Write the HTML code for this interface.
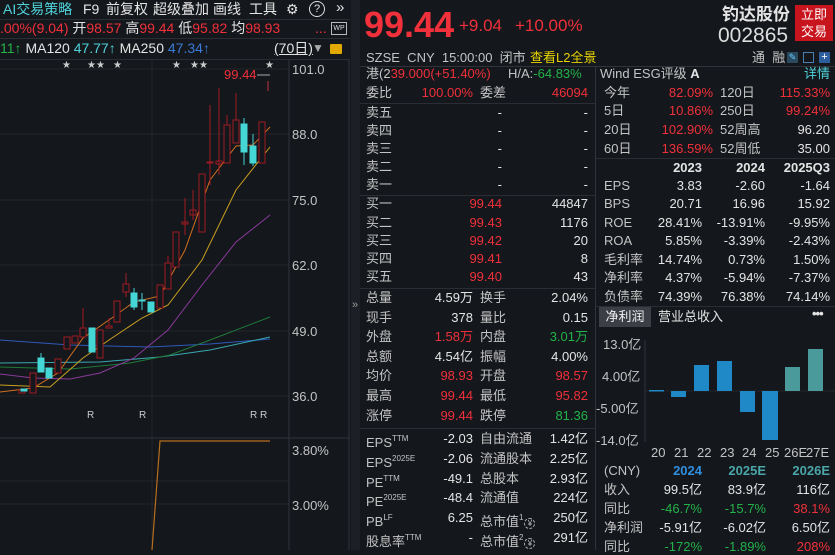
<!DOCTYPE html>
<html><head><meta charset="utf-8"><style>
*{margin:0;padding:0;box-sizing:border-box}
body{width:835px;height:550px;background:#14171c;overflow:hidden;position:relative;font-family:"Liberation Sans","Noto Sans CJK SC",sans-serif;font-size:13px;color:#d8d8d8}
.t{position:absolute;white-space:nowrap;line-height:16px}
.r{color:#f0303a}.g{color:#22b34a}.c{color:#4fd3da}.w{color:#e4e4e4}.l{color:#c4c4c4}.b{color:#3a7bd5}
.hl{position:absolute;height:1px;background:#2a2d33}
.vl{position:absolute;width:1px;background:#2a2d33}
sup{font-size:8px;vertical-align:6px}
.y{display:inline-block;width:11px;height:11px;border:1px dashed #aaa;border-radius:50%;font-size:8px;line-height:9px;text-align:center;vertical-align:0px;margin-left:1px}
</style></head><body>

<!-- LEFT PANEL -->
<div class="t c" style="left:3px;top:1px;font-size:14px;line-height:17px">AI交易策略</div>
<div class="t w" style="left:83px;top:1px;font-size:14px;line-height:17px">F9</div>
<div class="t w" style="left:106px;top:1px;font-size:14px;line-height:17px">前复权</div>
<div class="t w" style="left:153px;top:1px;font-size:14px;line-height:17px">超级叠加</div>
<div class="t w" style="left:213px;top:1px;font-size:14px;line-height:17px">画线</div>
<div class="t w" style="left:249px;top:1px;font-size:14px;line-height:17px">工具</div>
<div class="t w" style="left:286px;top:1px;font-size:14px;line-height:17px">⚙</div>
<div class="t w" style="left:309px;top:1px;width:16px;height:16px;border:1px solid #ddd;border-radius:50%;font-size:11px;line-height:14px;text-align:center">?</div>
<div class="t w" style="left:336px;top:0px;font-size:15px">»</div>
<div class="hl" style="left:0;top:19px;width:350px"></div>
<div class="t" style="left:0;top:20px;font-size:14px;line-height:17px"><span class="r">.00%(9.04)</span> <span class="w">开</span><span class="r">98.57</span> <span class="w">高</span><span class="r">99.44</span> <span class="w">低</span><span class="r">95.82</span> <span class="w">均</span><span class="r">98.93</span></div>
<div class="t r" style="left:315px;top:20px;font-size:14px">...</div>
<div class="t" style="left:331px;top:22px;width:16px;height:13px;border:1px solid #bbb;font-size:7px;line-height:11px;text-align:center;color:#ddd">WP</div>
<div class="hl" style="left:0;top:38px;width:350px"></div>
<div class="t" style="left:0;top:40px;font-size:14px;line-height:17px"><span class="g">11↑</span> <span class="w">MA120</span> <span class="c">47.77↑</span> <span class="w">MA250</span> <span class="b">47.34↑</span></div>
<div class="t w" style="left:274px;top:40px;font-size:14px;line-height:17px;text-decoration:underline">(70日)</div>
<div class="t" style="left:312px;top:40px;font-size:12px;color:#aaa">▼</div>
<div class="t" style="left:330px;top:44px;width:12px;height:10px;background:#e0a800;border-radius:1px"></div>
<div class="hl" style="left:0;top:59px;width:350px"></div>

<svg style="position:absolute;left:0;top:60px" width="350" height="490">
<g stroke="#23262c" stroke-width="1">
<line x1="0" y1="9" x2="289" y2="9"/><line x1="0" y1="74" x2="289" y2="74"/><line x1="0" y1="140" x2="289" y2="140"/><line x1="0" y1="205" x2="289" y2="205"/><line x1="0" y1="271" x2="289" y2="271"/><line x1="0" y1="336" x2="289" y2="336"/>
<line x1="152" y1="0" x2="152" y2="490"/>
<line x1="0" y1="421" x2="289" y2="421"/><line x1="0" y1="444" x2="289" y2="444"/>
</g>
<line x1="289" y1="0" x2="289" y2="490" stroke="#30333a"/>
<line x1="0" y1="378" x2="350" y2="378" stroke="#30333a"/>
<line x1="349" y1="0" x2="349" y2="490" stroke="#30333a"/>
<g fill="#ccc" font-size="10" font-family="Liberation Sans">
<text x="62" y="8">★</text><text x="87" y="8">★★</text><text x="113" y="8">★</text><text x="172" y="8">★</text><text x="190" y="8">★★</text><text x="265" y="8">★</text>
<text x="87" y="358">R</text><text x="139" y="358">R</text><text x="250" y="358">R R</text>
</g>
<g fill="#c4c4c4" font-size="13" font-family="Liberation Sans">
<text x="292" y="14">101.0</text><text x="292" y="79">88.0</text><text x="292" y="145">75.0</text><text x="292" y="210">62.0</text><text x="292" y="276">49.0</text><text x="292" y="341">36.0</text>
<text x="292" y="395">3.80%</text><text x="292" y="450">3.00%</text>
</g>
<text x="224" y="19" fill="#f0303a" font-size="13" font-family="Liberation Sans">99.44</text>
<line x1="257" y1="15" x2="270" y2="15" stroke="#aaa"/>
<path d="M268 21v10" stroke="#c0303a"/>
<g fill="none" stroke-width="1">
<polyline stroke="#2f59b8" points="0,280 70,285 150,287 210,284 270,279"/>
<polyline stroke="#3aa8b0" points="0,303 100,302 160,297 210,290 270,277"/>
<polyline stroke="#1f7a3a" points="0,307 70,309 130,303 170,295 210,280 270,257"/>
<polyline stroke="#8a3a9a" points="0,314 33,318 70,319 100,313 134,298 168,270 202,225 236,182 270,155"/>
<polyline stroke="#c9a020" points="0,325 50,327 83,298 109,280 142,258 168,245 202,200 236,130 270,87"/>
<polyline stroke="#d07020" points="0,332 33,328 58,313 83,278 109,260 134,242 160,236 185,190 210,120 236,86 253,85 270,67"/>
</g>
<g stroke="#a01a22" fill="#14171c" stroke-width="1">
<rect x="19" y="330" width="6" height="3"/>
<rect x="30" y="313" width="6" height="20"/>
<rect x="55" y="299" width="6" height="14"/>
<rect x="64" y="277" width="6" height="12"/>
<rect x="72" y="276" width="6" height="7"/>
<rect x="80" y="268" width="6" height="9"/><line x1="83" y1="248" x2="83" y2="268"/>
<rect x="97" y="270" width="6" height="28"/>
<rect x="106" y="266" width="6" height="2"/><line x1="109" y1="258" x2="109" y2="266"/>
<rect x="114" y="241" width="6" height="21"/>
<rect x="123" y="224" width="6" height="8"/><line x1="126" y1="213" x2="126" y2="224"/><line x1="126" y1="232" x2="126" y2="237"/>
<rect x="157" y="225" width="6" height="23"/>
<rect x="165" y="203" width="6" height="26"/><line x1="168" y1="196" x2="168" y2="203"/>
<rect x="173" y="172" width="6" height="35"/>
<rect x="182" y="162" width="6" height="2"/><line x1="185" y1="138" x2="185" y2="175"/>
<rect x="190" y="150" width="6" height="5"/><line x1="193" y1="130" x2="193" y2="160"/>
<rect x="199" y="114" width="6" height="58"/>
<rect x="207" y="102" width="6" height="1"/><line x1="210" y1="45" x2="210" y2="125"/>
<rect x="216" y="101" width="6" height="3"/><line x1="219" y1="28" x2="219" y2="115"/>
<rect x="224" y="65" width="6" height="38"/><line x1="227" y1="55" x2="227" y2="65"/>
<rect x="233" y="60" width="6" height="23"/><line x1="236" y1="33" x2="236" y2="60"/>
<rect x="259" y="62" width="6" height="41"/>
</g>
<g fill="#45d6d6" stroke="#45d6d6">
<rect x="21" y="329" width="6" height="2"/>
<rect x="38" y="298" width="6" height="14"/><line x1="41" y1="293" x2="41" y2="298"/>
<rect x="46" y="308" width="6" height="10"/>
<rect x="89" y="268" width="6" height="24"/>
<rect x="131" y="233" width="6" height="14"/><line x1="134" y1="228" x2="134" y2="250"/>
<rect x="139" y="240" width="6" height="1"/><line x1="142" y1="233" x2="142" y2="250"/>
<rect x="148" y="242" width="6" height="10"/>
<rect x="241" y="64" width="6" height="28"/><line x1="244" y1="58" x2="244" y2="105"/>
<rect x="250" y="86" width="6" height="17"/><line x1="253" y1="74" x2="253" y2="106"/>
</g>
<polyline fill="none" stroke="#b8701c" stroke-width="1.2" points="152,490 160,381 270,381"/>
</svg>
<div style="position:absolute;left:351px;top:0;width:9px;height:550px;background:#1c1f25"></div>
<div class="t" style="left:352px;top:297px;font-size:11px;color:#999">»</div>

<!-- MIDDLE HEADER -->
<div class="t r" style="left:364px;top:6px;font-size:36px;line-height:38px;font-weight:bold">99.44</div>
<div class="t r" style="left:459px;top:16px;font-size:17px;line-height:20px">+9.04</div>
<div class="t r" style="left:515px;top:16px;font-size:17px;line-height:20px">+10.00%</div>
<div class="t w" style="left:722px;top:5px;font-size:17px;line-height:20px;font-weight:bold">钓达股份</div>
<div class="t w" style="left:718px;top:25px;font-size:21px;line-height:22px;color:#ddd">002865</div>
<div class="t" style="left:795px;top:5px;width:38px;height:36px;background:#c8141c;color:#fff;font-size:13px;line-height:17px;text-align:center;padding-top:1px">立即<br>交易</div>
<div class="t l" style="left:366px;top:50px;font-size:13px">SZSE&nbsp;&nbsp;CNY&nbsp;&nbsp;15:00:00&nbsp;&nbsp;闭市</div>
<div class="t" style="left:530px;top:50px;color:#e8d400">查看L2全景</div>
<div class="t l" style="left:752px;top:50px">通&nbsp;&nbsp;融</div>
<div class="t" style="left:787px;top:52px;width:11px;height:11px;background:#2a4a60;color:#6cf;font-size:9px;line-height:11px;text-align:center">✎</div>
<div class="t" style="left:803px;top:52px;width:11px;height:11px;border:1px solid #4a7fb0"></div>
<div class="t" style="left:819px;top:52px;width:11px;height:11px;background:#2c5d9c;color:#fff;font-size:11px;line-height:11px;text-align:center">+</div>
<div class="hl" style="left:360px;top:66px;width:475px;background:#30333a"></div>
<div class="vl" style="left:595px;top:66px;height:484px;background:#30333a"></div>

<div class="t" style="left:366px;top:66px"><span class="l">港(2</span><span class="r">39.000(+51.40%)</span></div>
<div class="t l" style="left:508px;top:66px">H/A:<span class="g">-64.83%</span></div>
<div class="t l" style="left:366px;top:85px">委比</div><div class="t r" style="right:362px;top:85px">100.00%</div><div class="t l" style="left:480px;top:85px">委差</div><div class="t r" style="right:247px;top:85px">46094</div>
<div class="hl" style="left:360px;top:103px;width:235px"></div>
<div class="t l" style="left:366px;top:105px">卖五</div><div class="t w" style="right:333px;top:105px">-</div><div class="t w" style="right:247px;top:105px">-</div>
<div class="t l" style="left:366px;top:123px">卖四</div><div class="t w" style="right:333px;top:123px">-</div><div class="t w" style="right:247px;top:123px">-</div>
<div class="t l" style="left:366px;top:141px">卖三</div><div class="t w" style="right:333px;top:141px">-</div><div class="t w" style="right:247px;top:141px">-</div>
<div class="t l" style="left:366px;top:159px">卖二</div><div class="t w" style="right:333px;top:159px">-</div><div class="t w" style="right:247px;top:159px">-</div>
<div class="t l" style="left:366px;top:177px">卖一</div><div class="t w" style="right:333px;top:177px">-</div><div class="t w" style="right:247px;top:177px">-</div>
<div class="hl" style="left:360px;top:195px;width:235px"></div>
<div class="t l" style="left:366px;top:196px">买一</div><div class="t r" style="right:333px;top:196px">99.44</div><div class="t w" style="right:247px;top:196px">44847</div>
<div class="t l" style="left:366px;top:215px">买二</div><div class="t r" style="right:333px;top:215px">99.43</div><div class="t w" style="right:247px;top:215px">1176</div>
<div class="t l" style="left:366px;top:233px">买三</div><div class="t r" style="right:333px;top:233px">99.42</div><div class="t w" style="right:247px;top:233px">20</div>
<div class="t l" style="left:366px;top:251px">买四</div><div class="t r" style="right:333px;top:251px">99.41</div><div class="t w" style="right:247px;top:251px">8</div>
<div class="t l" style="left:366px;top:269px">买五</div><div class="t r" style="right:333px;top:269px">99.40</div><div class="t w" style="right:247px;top:269px">43</div>
<div class="hl" style="left:360px;top:288px;width:235px"></div>

<div class="t l" style="left:366px;top:290px">总量</div><div class="t w" style="right:362px;top:290px">4.59万</div><div class="t l" style="left:480px;top:290px">换手</div><div class="t w" style="right:247px;top:290px">2.04%</div>
<div class="t l" style="left:366px;top:310px">现手</div><div class="t w" style="right:362px;top:310px">378</div><div class="t l" style="left:480px;top:310px">量比</div><div class="t w" style="right:247px;top:310px">0.15</div>
<div class="t l" style="left:366px;top:329px">外盘</div><div class="t r" style="right:362px;top:329px">1.58万</div><div class="t l" style="left:480px;top:329px">内盘</div><div class="t g" style="right:247px;top:329px">3.01万</div>
<div class="t l" style="left:366px;top:349px">总额</div><div class="t w" style="right:362px;top:349px">4.54亿</div><div class="t l" style="left:480px;top:349px">振幅</div><div class="t w" style="right:247px;top:349px">4.00%</div>
<div class="t l" style="left:366px;top:368px">均价</div><div class="t r" style="right:362px;top:368px">98.93</div><div class="t l" style="left:480px;top:368px">开盘</div><div class="t r" style="right:247px;top:368px">98.57</div>
<div class="t l" style="left:366px;top:388px">最高</div><div class="t r" style="right:362px;top:388px">99.44</div><div class="t l" style="left:480px;top:388px">最低</div><div class="t r" style="right:247px;top:388px">95.82</div>
<div class="t l" style="left:366px;top:408px">涨停</div><div class="t r" style="right:362px;top:408px">99.44</div><div class="t l" style="left:480px;top:408px">跌停</div><div class="t g" style="right:247px;top:408px">81.36</div>
<div class="hl" style="left:360px;top:428px;width:235px"></div>
<div class="t l" style="left:366px;top:431px">EPS<sup>TTM</sup></div><div class="t w" style="right:362px;top:431px">-2.03</div><div class="t l" style="left:480px;top:431px">自由流通</div><div class="t w" style="right:247px;top:431px">1.42亿</div>
<div class="t l" style="left:366px;top:451px">EPS<sup>2025E</sup></div><div class="t w" style="right:362px;top:451px">-2.06</div><div class="t l" style="left:480px;top:451px">流通股本</div><div class="t w" style="right:247px;top:451px">2.25亿</div>
<div class="t l" style="left:366px;top:471px">PE<sup>TTM</sup></div><div class="t w" style="right:362px;top:471px">-49.1</div><div class="t l" style="left:480px;top:471px">总股本</div><div class="t w" style="right:247px;top:471px">2.93亿</div>
<div class="t l" style="left:366px;top:490px">PE<sup>2025E</sup></div><div class="t w" style="right:362px;top:490px">-48.4</div><div class="t l" style="left:480px;top:490px">流通值</div><div class="t w" style="right:247px;top:490px">224亿</div>
<div class="t l" style="left:366px;top:510px">PB<sup>LF</sup></div><div class="t w" style="right:362px;top:510px">6.25</div><div class="t l" style="left:480px;top:510px">总市值<sup>1</sup><span class="y">¥</span></div><div class="t w" style="right:247px;top:510px">250亿</div>
<div class="t l" style="left:366px;top:530px">股息率<sup>TTM</sup></div><div class="t w" style="right:362px;top:530px">-</div><div class="t l" style="left:480px;top:530px">总市值<sup>2</sup><span class="y">¥</span></div><div class="t w" style="right:247px;top:530px">291亿</div>

<!-- RIGHT -->
<div class="t l" style="left:600px;top:66px">Wind ESG评级 <b class="w">A</b></div>
<div class="t c" style="right:5px;top:66px">详情</div>
<div class="t l" style="left:604px;top:85px">今年</div><div class="t r" style="right:122px;top:85px">82.09%</div><div class="t l" style="left:720px;top:85px">120日</div><div class="t r" style="right:5px;top:85px">115.33%</div>
<div class="t l" style="left:604px;top:103px">5日</div><div class="t r" style="right:122px;top:103px">10.86%</div><div class="t l" style="left:720px;top:103px">250日</div><div class="t r" style="right:5px;top:103px">99.24%</div>
<div class="t l" style="left:604px;top:122px">20日</div><div class="t r" style="right:122px;top:122px">102.90%</div><div class="t l" style="left:720px;top:122px">52周高</div><div class="t w" style="right:5px;top:122px">96.20</div>
<div class="t l" style="left:604px;top:141px">60日</div><div class="t r" style="right:122px;top:141px">136.59%</div><div class="t l" style="left:720px;top:141px">52周低</div><div class="t w" style="right:5px;top:141px">35.00</div>
<div class="hl" style="left:596px;top:158px;width:239px"></div>
<div class="t w" style="right:133px;top:160px;font-weight:bold">2023</div><div class="t w" style="right:70px;top:160px;font-weight:bold">2024</div><div class="t w" style="right:5px;top:160px;font-weight:bold">2025Q3</div>
<div class="t l" style="left:604px;top:178px">EPS</div><div class="t w" style="right:133px;top:178px">3.83</div><div class="t w" style="right:70px;top:178px">-2.60</div><div class="t w" style="right:5px;top:178px">-1.64</div>
<div class="t l" style="left:604px;top:196px">BPS</div><div class="t w" style="right:133px;top:196px">20.71</div><div class="t w" style="right:70px;top:196px">16.96</div><div class="t w" style="right:5px;top:196px">15.92</div>
<div class="t l" style="left:604px;top:215px">ROE</div><div class="t w" style="right:133px;top:215px">28.41%</div><div class="t w" style="right:70px;top:215px">-13.91%</div><div class="t w" style="right:5px;top:215px">-9.95%</div>
<div class="t l" style="left:604px;top:233px">ROA</div><div class="t w" style="right:133px;top:233px">5.85%</div><div class="t w" style="right:70px;top:233px">-3.39%</div><div class="t w" style="right:5px;top:233px">-2.43%</div>
<div class="t l" style="left:604px;top:252px">毛利率</div><div class="t w" style="right:133px;top:252px">14.74%</div><div class="t w" style="right:70px;top:252px">0.73%</div><div class="t w" style="right:5px;top:252px">1.50%</div>
<div class="t l" style="left:604px;top:270px">净利率</div><div class="t w" style="right:133px;top:270px">4.37%</div><div class="t w" style="right:70px;top:270px">-5.94%</div><div class="t w" style="right:5px;top:270px">-7.37%</div>
<div class="t l" style="left:604px;top:289px">负债率</div><div class="t w" style="right:133px;top:289px">74.39%</div><div class="t w" style="right:70px;top:289px">76.38%</div><div class="t w" style="right:5px;top:289px">74.14%</div>
<div class="hl" style="left:596px;top:306px;width:239px"></div>
<div class="t" style="left:599px;top:307px;width:52px;height:20px;background:#3b3e45;color:#eee;line-height:20px;text-align:center;font-size:13px">净利润</div>
<div class="t w" style="left:658px;top:309px">营业总收入</div>
<div class="t w" style="left:812px;top:306px;font-weight:bold;letter-spacing:-1px">•••</div>
<svg style="position:absolute;left:596px;top:330px" width="239" height="130">
<line x1="49" y1="10" x2="49" y2="112" stroke="#30333a"/>
<line x1="50" y1="61" x2="239" y2="61" stroke="#23262c"/>
<g fill="#c4c4c4" font-size="13" font-family="Liberation Sans,Noto Sans CJK SC">
<text x="7" y="19">13.0亿</text><text x="6" y="51">4.00亿</text><text x="0" y="83">-5.00亿</text><text x="0" y="115">-14.0亿</text>
<text x="55" y="127">20</text><text x="78" y="127">21</text><text x="101" y="127">22</text><text x="124" y="127">23</text><text x="146" y="127">24</text><text x="169" y="127">25</text><text x="188" y="127">26E</text><text x="210" y="127">27E</text>
</g>
<g fill="#1f88c6">
<rect x="53" y="60" width="15" height="1.5"/>
<rect x="75" y="61" width="15" height="6"/>
<rect x="98" y="35" width="15" height="26"/>
<rect x="121" y="31" width="15" height="30"/>
<rect x="144" y="61" width="15" height="21"/>
<rect x="166" y="61" width="16" height="49"/>
</g>
<g fill="#4a9a9c"><rect x="189" y="37" width="15" height="24"/><rect x="212" y="19" width="15" height="42"/></g>
</svg>
<div class="t l" style="left:604px;top:463px">(CNY)</div><div class="t" style="right:133px;top:463px;color:#2f8fdf;font-weight:bold">2024</div><div class="t" style="right:69px;top:463px;color:#4aa6a8;font-weight:bold">2025E</div><div class="t" style="right:5px;top:463px;color:#4aa6a8;font-weight:bold">2026E</div>
<div class="t l" style="left:604px;top:482px">收入</div><div class="t w" style="right:133px;top:482px">99.5亿</div><div class="t w" style="right:69px;top:482px">83.9亿</div><div class="t w" style="right:5px;top:482px">116亿</div>
<div class="t l" style="left:604px;top:501px">同比</div><div class="t g" style="right:133px;top:501px">-46.7%</div><div class="t g" style="right:69px;top:501px">-15.7%</div><div class="t r" style="right:5px;top:501px">38.1%</div>
<div class="t l" style="left:604px;top:520px">净利润</div><div class="t w" style="right:133px;top:520px">-5.91亿</div><div class="t w" style="right:69px;top:520px">-6.02亿</div><div class="t w" style="right:5px;top:520px">6.50亿</div>
<div class="t l" style="left:604px;top:539px">同比</div><div class="t g" style="right:133px;top:539px">-172%</div><div class="t g" style="right:69px;top:539px">-1.89%</div><div class="t r" style="right:5px;top:539px">208%</div>
</body></html>
